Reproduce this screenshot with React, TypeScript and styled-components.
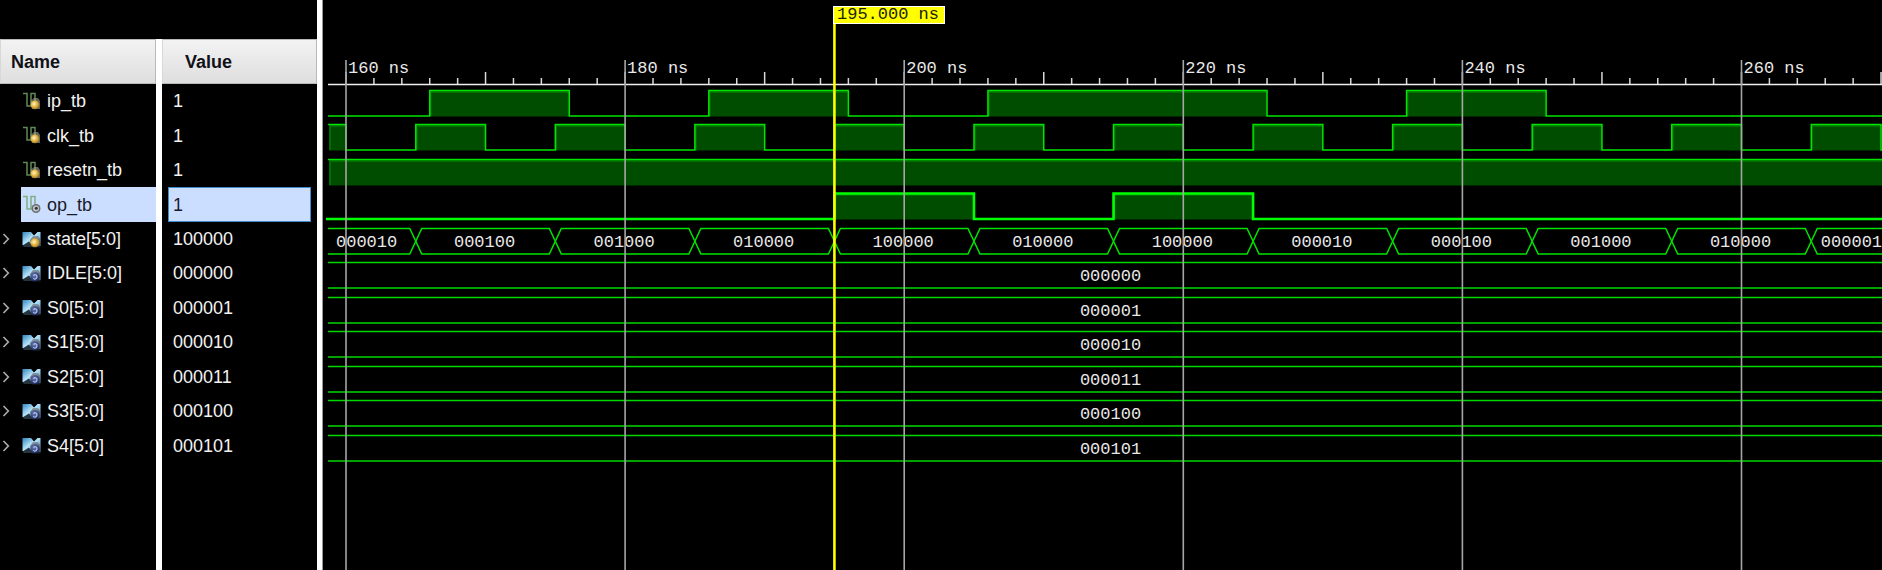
import React from "react";
import styled, { createGlobalStyle } from "styled-components";

const GlobalStyle = createGlobalStyle`
  *, *::before, *::after { box-sizing: border-box; }
  body { margin: 0; background: #000; font-family: "Liberation Sans", Arial, sans-serif; }
`;

/* ---------- data ---------- */

type Kind = "signal" | "output" | "bus" | "constant";

interface Signal {
  name: string;
  value: string;
  kind: Kind;
  selected?: boolean;
  /* time ranges, in ns, where a scalar is high */
  high?: [number, number][];
  /* value changes of a bus: time and the value from there on */
  changes?: [number, string][];
}

const START = 158.7;
const END = 270.9;

const clock: [number, number][] = [[START, 160]];
for (let t = 165; t <= 265; t += 10) clock.push([t, t + 5]);

const signals: Signal[] = [
  { name: "ip_tb", value: "1", kind: "signal", high: [[166, 176], [186, 196], [206, 226], [236, 246]] },
  { name: "clk_tb", value: "1", kind: "signal", high: clock },
  { name: "resetn_tb", value: "1", kind: "signal", high: [[START, 400]] },
  { name: "op_tb", value: "1", kind: "output", selected: true, high: [[195, 205], [215, 225]] },
  {
    name: "state[5:0]", value: "100000", kind: "bus",
    changes: [
      [START - 0.6, "000010"], [165, "000100"], [175, "001000"], [185, "010000"],
      [195, "100000"], [205, "010000"], [215, "100000"], [225, "000010"],
      [235, "000100"], [245, "001000"], [255, "010000"], [265, "000001"],
    ],
  },
  { name: "IDLE[5:0]", value: "000000", kind: "constant" },
  { name: "S0[5:0]", value: "000001", kind: "constant" },
  { name: "S1[5:0]", value: "000010", kind: "constant" },
  { name: "S2[5:0]", value: "000011", kind: "constant" },
  { name: "S3[5:0]", value: "000100", kind: "constant" },
  { name: "S4[5:0]", value: "000101", kind: "constant" },
];

/* ---------- time scale ---------- */

const PX_PER_NS = 13.955;
const timeX = (t: number) => 23 + (t - 160) * PX_PER_NS;
const LEFT = 5;
const HIGH_Y = 6.5;
const LOW_Y = 32;
const FAR = 4000;

/* ---------- layout ---------- */

const Viewer = styled.main`
  display: grid;
  grid-template-columns: 317px 6px minmax(0, 1fr);
  min-height: 100vh;
  background: #000;
`;

const SignalPane = styled.section`
  display: flex;
  flex-direction: column;
  padding-top: 39px;
`;

const Splitter = styled.div`
  background: #fff;
  border-right: 1px solid #999;
`;

const SignalTable = styled.table`
  flex: 1;
  display: flex;
  flex-direction: column;
  background: linear-gradient(to right, #000 156px, #fff 156px 162px, #000 162px);
`;

const HeadRow = styled.tr`
  display: grid;
  grid-template-columns: 156px 155px;
  column-gap: 6px;
  height: 45px;
`;

const HeadCell = styled.th<{ $indent: number }>`
  display: flex;
  align-items: center;
  padding: 1px 0 0 ${(p) => p.$indent}px;
  background: linear-gradient(#f3f3f3, #dededf);
  border: 1px solid #b9b9b9;
  border-left-color: #d8d8d8;
  color: #111118;
  font-size: 18px;
  font-weight: 700;
`;

const Rows = styled.tbody`
  display: grid;
  grid-template-rows: repeat(11, minmax(0, 1fr));
  height: 379px;
`;

const Row = styled.tr`
  display: grid;
  grid-template-columns: 156px 155px;
  column-gap: 6px;
`;

const NameCell = styled.td`
  display: grid;
  grid-template-columns: 21px 1fr;
  padding: 0;
`;

const Expander = styled.button`
  display: flex;
  align-items: center;
  padding: 0 0 0 2px;
  border: 0;
  background: none;
`;

const NameLabel = styled.span<{ $selected?: boolean }>`
  grid-column: 2;
  display: flex;
  align-items: center;
  gap: 6px;
  padding-left: 1px;
  font-size: 18px;
  line-height: 20px;
  white-space: nowrap;
  color: ${(p) => (p.$selected ? "#1a1a2a" : "#f2f2f2")};
  background: ${(p) => (p.$selected ? "#ccdeff" : "transparent")};
`;

const ValueCell = styled.td`
  display: flex;
  padding: 0 6px;
`;

const ValueLabel = styled.span<{ $selected?: boolean }>`
  flex: 1;
  display: flex;
  align-items: center;
  padding-left: 4px;
  border: 1px solid ${(p) => (p.$selected ? "#3c8ccc" : "transparent")};
  font-size: 18px;
  line-height: 20px;
  color: ${(p) => (p.$selected ? "#1a1a2a" : "#f2f2f2")};
  background: ${(p) => (p.$selected ? "#ccdeff" : "transparent")};
`;

const WavePane = styled.section`
  position: relative;
  overflow: hidden;
`;

const Ruler = styled.svg`
  display: block;
  width: 100%;
  height: 84px;
  overflow: visible;
`;

const Traces = styled.div`
  display: grid;
  grid-template-rows: repeat(11, minmax(0, 1fr));
  height: 379px;
`;

const Trace = styled.svg`
  display: block;
  width: 100%;
  height: 100%;
  min-height: 0;
  overflow: visible;
`;

const Overlay = styled.svg`
  position: absolute;
  inset: 0;
  width: 100%;
  height: 100%;
  pointer-events: none;
`;

const WaveText = styled.text`
  font-family: "Liberation Mono", "Courier New", monospace;
  font-size: 17px;
  fill: #e8e8e8;
`;

const CursorTag = styled.output`
  position: absolute;
  top: 6px;
  left: 510px;
  padding: 0 5px 0 3px;
  border: 1px solid #fff;
  background: #ff0;
  color: #222200;
  font-family: "Liberation Mono", "Courier New", monospace;
  font-size: 17px;
  line-height: 16px;
  white-space: pre;
`;

/* ---------- icons ---------- */

const IconDefs = () => (
  <svg width="0" height="0" style={{ position: "absolute" }} aria-hidden="true">
    <defs>
      <radialGradient id="gold" cx="0.4" cy="0.4" r="0.65">
        <stop offset="0" stopColor="#fff6cf" />
        <stop offset="0.5" stopColor="#e8b840" />
        <stop offset="1" stopColor="#9a7a2a" />
      </radialGradient>
      <radialGradient id="navy" cx="0.4" cy="0.35" r="0.7">
        <stop offset="0" stopColor="#6f7fb8" />
        <stop offset="1" stopColor="#16245e" />
      </radialGradient>
      <linearGradient id="sky" x1="0" y1="0" x2="1" y2="1">
        <stop offset="0" stopColor="#2f84bd" />
        <stop offset="0.45" stopColor="#b5e2fa" />
        <stop offset="1" stopColor="#3d9ad2" />
      </linearGradient>
      <linearGradient id="shade" x1="0" y1="0" x2="0" y2="1">
        <stop offset="0" stopColor="#77797c" />
        <stop offset="1" stopColor="#26282b" />
      </linearGradient>
    </defs>
  </svg>
);

const SignalIcon = ({ kind }: { kind: Kind }) => {
  if (kind === "signal" || kind === "output") {
    const output = kind === "output";
    return (
      <svg width="19" height="19" viewBox="0 0 19 19" aria-hidden="true">
        <path
          d="M1 1.500H5V14H9V1.500H13V9"
          fill="none"
          stroke={output ? "#7fae84" : "#5f8a55"}
          strokeWidth="1.500"
        />
        {output ? (
          <>
            <circle cx="14" cy="13.500" r="4.500" fill="#6a6f72" />
            <circle cx="14" cy="13.500" r="3" fill="#bfc4c8" />
            <circle cx="14.300" cy="13.300" r="1.500" fill="#30343a" />
          </>
        ) : (
          <>
            <path d="M8.500 9L12 6H16L18 9V17H10Z" fill="#a5a598" opacity="0.6" />
            <circle cx="13" cy="12.800" r="4.400" fill="url(#gold)" />
          </>
        )}
      </svg>
    );
  }
  return (
    <svg width="19" height="19" viewBox="0 0 19 19" aria-hidden="true">
      <path d="M0.500 2H9L12 5.500L15.500 2H18.500V16H14L10 13L6 15H0.500Z" fill="url(#sky)" />
      <path d="M0.500 15.500L7 11.500L11 17H2Z" fill="#26343d" />
      <path d="M8 10L11 6H16L18.500 9V17.500H10Z" fill="url(#shade)" opacity="0.7" />
      <circle cx="13" cy="12.800" r="4.500" fill={kind === "bus" ? "url(#gold)" : "url(#navy)"} />
      {kind === "constant" && (
        <path d="M11.500 11.500Q13.500 9.800 14.800 11.600Q15.500 14 13.500 15Q12 15.400 11.300 14.300" fill="none" stroke="#b9c4ec" strokeWidth="1.100" />
      )}
    </svg>
  );
};

const Chevron = () => (
  <svg width="8" height="12" viewBox="0 0 8 12" aria-hidden="true">
    <path d="M1.500 1L6.300 6L1.500 11" fill="none" stroke="#a8a8a8" strokeWidth="1.700" />
  </svg>
);

/* ---------- waveforms ---------- */

const ScalarWave = ({ high = [], selected }: Pick<Signal, "high" | "selected">) => {
  const left = selected ? LEFT - 2 : LEFT;
  let path = "";
  high.forEach(([from, to], i) => {
    const a = timeX(from);
    const b = timeX(to);
    if (i === 0) path = from === START ? `M${left} ${HIGH_Y}` : `M${left} ${LOW_Y}H${a}V${HIGH_Y}`;
    else path += `H${a}V${HIGH_Y}`;
    path += `H${b}V${LOW_Y}`;
  });
  path += `H${FAR}`;
  return (
    <>
      {high.map(([from, to]) => {
        const x = Math.max(timeX(from), LEFT + 1);
        return (
          <g key={from}>
            <rect x={x} y={HIGH_Y} width={timeX(to) - x} height={LOW_Y - HIGH_Y + 0.5} fill="#004d00" />
            <path d={`M${x + 1} ${LOW_Y}V${HIGH_Y + 1.5}H${timeX(to)}`} fill="none" stroke="#007800" strokeWidth="1.500" />
          </g>
        );
      })}
      <path d={path} fill="none" stroke={selected ? "#00ff00" : "#00e400"} strokeWidth={selected ? 2.6 : 1.5} />
    </>
  );
};

const BusWave = ({ changes = [] }: Pick<Signal, "changes">) => (
  <>
    {changes.map(([t, label], i) => {
      const first = i === 0;
      const last = i === changes.length - 1;
      const end = last ? END : changes[i + 1][0];
      const a = timeX(t);
      const b = timeX(end);
      const mid = (HIGH_Y + LOW_Y) / 2;
      const d = first
        ? `M${LEFT} ${HIGH_Y}H${b - 6}L${b} ${mid}L${b - 6} ${LOW_Y}H${LEFT}`
        : `M${b} ${mid}L${b - 6} ${HIGH_Y}H${a + 6}L${a} ${mid}L${a + 6} ${LOW_Y}H${b - 6}Z`;
      return (
        <g key={t}>
          <path d={d} fill="none" stroke="#00e400" strokeWidth="1.500" />
          <WaveText x={(a + b) / 2 - 1} y="25" textAnchor="middle">{label}</WaveText>
        </g>
      );
    })}
  </>
);

const ConstantWave = ({ value }: Pick<Signal, "value">) => (
  <>
    <path d={`M${LEFT} ${HIGH_Y}H${FAR}M${LEFT} ${LOW_Y}H${FAR}`} stroke="#00d800" strokeWidth="1.500" />
    <WaveText x="50%" dx="8" y="25" textAnchor="middle">{value}</WaveText>
  </>
);

const ticks: number[] = [];
for (let t = 160; t <= 270; t += 2) ticks.push(t);
const majors = ticks.filter((t) => t % 20 === 0);

export default function App() {
  return (
    <>
      <GlobalStyle />
      <IconDefs />
      <Viewer>
        <SignalPane>
          <SignalTable>
            <thead>
              <HeadRow>
                <HeadCell $indent={10}>Name</HeadCell>
                <HeadCell $indent={22}>Value</HeadCell>
              </HeadRow>
            </thead>
            <Rows>
              {signals.map((s) => (
                <Row key={s.name}>
                  <NameCell>
                    {(s.kind === "bus" || s.kind === "constant") && (
                      <Expander type="button" aria-label={`Expand ${s.name}`}>
                        <Chevron />
                      </Expander>
                    )}
                    <NameLabel $selected={s.selected}>
                      <SignalIcon kind={s.kind} />
                      {s.name}
                    </NameLabel>
                  </NameCell>
                  <ValueCell>
                    <ValueLabel $selected={s.selected}>{s.value}</ValueLabel>
                  </ValueCell>
                </Row>
              ))}
            </Rows>
          </SignalTable>
        </SignalPane>
        <Splitter />
        <WavePane>
          <Ruler>
            {ticks.map((t) => (
              <line
                key={t}
                x1={timeX(t)}
                x2={timeX(t)}
                y1={t % 10 === 0 ? 72 : 78}
                y2="84"
                stroke="#d8d8d8"
                strokeWidth="1.500"
              />
            ))}
            {majors.map((t) => (
              <WaveText key={t} x={timeX(t) + 2} y="73">{`${t} ns`}</WaveText>
            ))}
            <line x1={LEFT} x2={FAR} y1="84.500" y2="84.500" stroke="#f0f0f0" strokeWidth="1.600" />
          </Ruler>
          <Traces>
            {signals.map((s) => (
              <Trace key={s.name} role="img" aria-label={s.name}>
                {s.high && <ScalarWave high={s.high} selected={s.selected} />}
                {s.changes && <BusWave changes={s.changes} />}
                {s.kind === "constant" && <ConstantWave value={s.value} />}
              </Trace>
            ))}
          </Traces>
          <Overlay aria-hidden="true">
            {majors.map((t) => (
              <line key={t} x1={timeX(t)} x2={timeX(t)} y1="60" y2="100%" stroke="#a6a6a6" strokeWidth="1.600" />
            ))}
            <line x1={timeX(195)} x2={timeX(195)} y1="20" y2="100%" stroke="#ffff00" strokeWidth="2.600" />
          </Overlay>
          <CursorTag>195.000 ns</CursorTag>
        </WavePane>
      </Viewer>
    </>
  );
}
